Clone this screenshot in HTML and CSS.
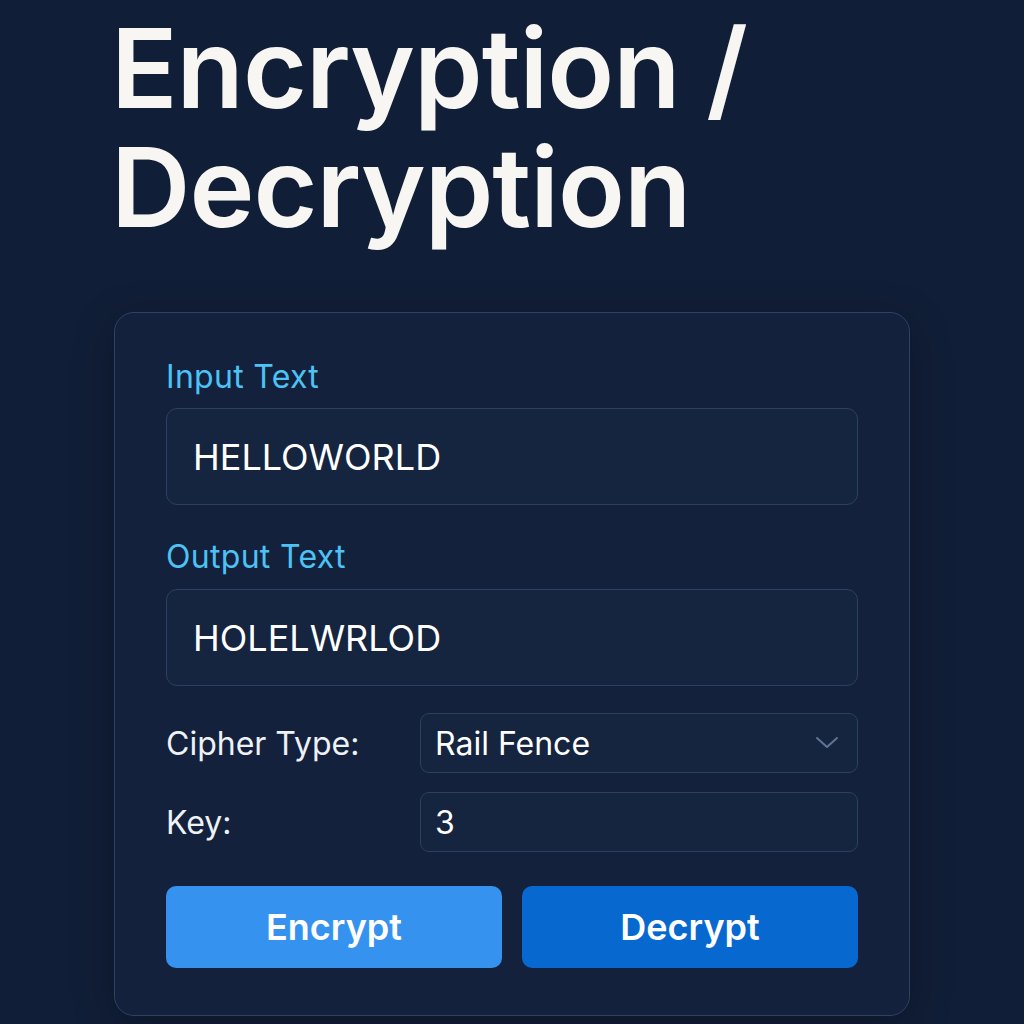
FILE: index.html
```html
<!DOCTYPE html>
<html lang="en">
<head>
<meta charset="utf-8">
<title>Encryption / Decryption</title>
<link rel="stylesheet" href="styles.css">
</head>
<body>
<main class="page">
  <h1 class="title">Encryption /<br>Decryption</h1>
  <section class="card">
    <label class="field-label" for="input">Input Text</label>
    <div class="text-box" id="input">HELLOWORLD</div>
    <label class="field-label out" for="output">Output Text</label>
    <div class="text-box" id="output">HOLELWRLOD</div>
    <div class="row cipher-row">
      <span class="row-label">Cipher Type:</span>
      <div class="select">
        <span>Rail Fence</span>
        <svg class="chev" width="24" height="14" viewBox="0 0 24 14"><path d="M2 2 L12 11 L22 2" fill="none" stroke="#5f7595" stroke-width="2" stroke-linecap="round" stroke-linejoin="round"/></svg>
      </div>
    </div>
    <div class="row key-row">
      <span class="row-label">Key:</span>
      <div class="select"><span>3</span></div>
    </div>
    <div class="buttons">
      <button class="btn encrypt">Encrypt</button>
      <button class="btn decrypt">Decrypt</button>
    </div>
  </section>
</main>
</body>
</html>
```
FILE: styles.css
```css
html, body {
  margin: 0;
  padding: 0;
  background: #111e37;
}
body {
  font-family: Inter, "Noto Sans", sans-serif;
  color: #f4f6fa;
  height: 1024px;
  overflow: hidden;
}
.page {
  padding-left: 114px;
  width: 796px;
}
.title {
  margin: 9px 0 65px -3px;
  font-size: 110px;
  line-height: 119px;
  font-weight: 600;
  letter-spacing: -1px;
  color: #f7f6f2;
}
.card {
  box-sizing: border-box;
  width: 796px;
  border: 1.5px solid #2c4266;
  border-radius: 20px;
  background: #13213c;
  box-shadow: 0 10px 40px rgba(0, 0, 0, 0.25);
  padding: 46px 51px 47px 51px;
  display: flex;
  flex-direction: column;
}
.field-label {
  display: block;
  font-size: 32px;
  line-height: 36px;
  letter-spacing: 0.3px;
  color: #4cc2f5;
  margin-bottom: 13px;
}
.field-label.out {
  margin-top: 34px;
  margin-bottom: 14px;
}
.text-box {
  box-sizing: border-box;
  height: 97px;
  border: 1.5px solid #2b4062;
  border-radius: 11px;
  background: #15243f;
  padding: 0 26px;
  display: flex;
  align-items: center;
  font-size: 36px;
  color: #ffffff;
}
.row {
  display: grid;
  grid-template-columns: 254px 1fr;
  align-items: center;
}
.cipher-row {
  margin-top: 27px;
}
.key-row {
  margin-top: 19px;
}
.row-label {
  font-size: 32px;
  color: #eef1f6;
}
.select {
  box-sizing: border-box;
  height: 60px;
  border: 1.5px solid #2b4062;
  border-radius: 9px;
  background: #15243f;
  padding: 0 14px;
  display: flex;
  align-items: center;
  justify-content: space-between;
  font-size: 32px;
  color: #ffffff;
}
.chev {
  margin-right: 4px;
}
.buttons {
  margin-top: 34px;
  display: grid;
  grid-template-columns: 1fr 1fr;
  gap: 20px;
}
.btn {
  height: 82px;
  border: none;
  border-radius: 10px;
  font-family: Inter, "Noto Sans", sans-serif;
  font-size: 36px;
  font-weight: 600;
  color: #ffffff;
}
.encrypt {
  background: #3592ee;
}
.decrypt {
  background: #0768cf;
}
```
